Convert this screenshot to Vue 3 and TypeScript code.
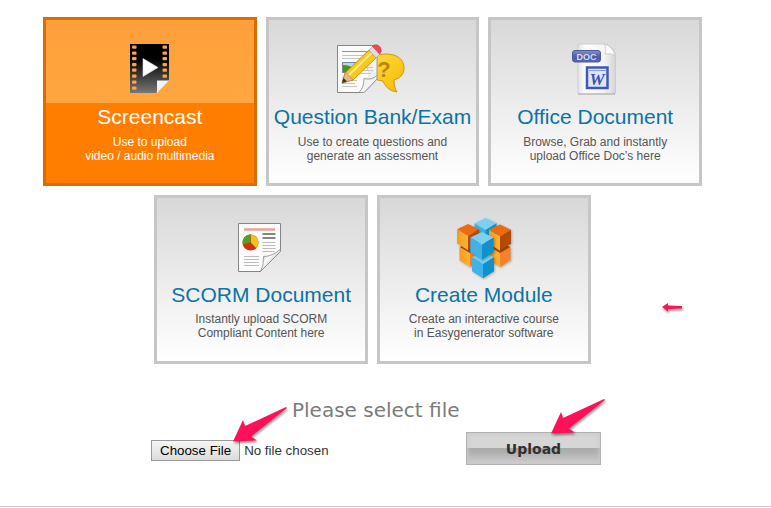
<script setup lang="ts">
import { ref } from 'vue'

type Kind = 'film' | 'exam' | 'office' | 'report' | 'cubes'

interface Option {
  kind: Kind
  title: string
  lines: [string, string]
}

interface Cube {
  x: number
  y: number
  w: number
  tone: 'blue' | 'orange'
}

const options: Option[] = [
  { kind: 'film', title: 'Screencast', lines: ['Use to upload', 'video / audio multimedia'] },
  { kind: 'exam', title: 'Question Bank/Exam', lines: ['Use to create questions and', 'generate an assessment'] },
  { kind: 'office', title: 'Office Document', lines: ['Browse, Grab and instantly', 'upload Office Doc’s here'] },
  { kind: 'report', title: 'SCORM Document', lines: ['Instantly upload SCORM', 'Compliant Content here'] },
  { kind: 'cubes', title: 'Create Module', lines: ['Create an interactive course', 'in Easygenerator software'] },
]

const selected = ref<Kind>('film')

// Painted back to front; x and y are the top corner of each cube.
const cubes: Cube[] = [
  { x: 43.5, y: 4, w: 11, tone: 'blue' },
  { x: 28, y: 28, w: 10.5, tone: 'orange' },
  { x: 58, y: 28, w: 10.5, tone: 'orange' },
  { x: 26, y: 10, w: 11, tone: 'orange' },
  { x: 58, y: 10.5, w: 11, tone: 'orange' },
  { x: 41, y: 38, w: 11, tone: 'blue' },
  { x: 40, y: 18, w: 11.7, tone: 'blue' },
]

const holes = [9.5, 15.5, 21, 27, 32.5, 38.5, 44.5, 50.5]

function cubeTop({ x, y, w }: Cube): string {
  return `M${x} ${y}l${w} ${w * 0.48}l${-w} ${w * 0.6}l${-w} ${-w * 0.6}z`
}
function cubeLeft({ x, y, w }: Cube): string {
  return `M${x - w} ${y + w * 0.48}l${w} ${w * 0.6}v${w * 1.3}l${-w} ${-w * 0.64}z`
}
function cubeRight({ x, y, w }: Cube): string {
  return `M${x + w} ${y + w * 0.48}l${-w} ${w * 0.6}v${w * 1.3}l${w} ${-w * 0.64}z`
}
</script>

<template>
  <main class="page">
    <nav class="options" aria-label="Content type">
      <a
        v-for="option in options"
        :key="option.kind"
        href="#"
        class="card"
        :class="{ active: selected === option.kind, shifted: option.kind === 'report' }"
        @click.prevent="selected = option.kind"
      >
        <svg v-if="option.kind === 'film'" class="icon" viewBox="0 0 84 64" aria-hidden="true">
          <defs>
            <linearGradient id="film" x1="0" y1="0" x2="0" y2="1">
              <stop offset="0.3" stop-color="#000" />
              <stop offset="1" stop-color="#777" />
            </linearGradient>
          </defs>
          <path d="M22 8h39v36L48 57H22z" fill="url(#film)" />
          <path d="M49 57V44.5h12z" fill="#f5f3f0" />
          <g fill="#ffa33c">
            <rect v-for="y in holes" :key="y" x="24" :y="y" width="4.5" height="3.2" rx="1" />
            <rect v-for="y in holes.slice(0, 6)" :key="y" x="54.5" :y="y" width="4.5" height="3.2" rx="1" />
          </g>
          <path d="M35 22.5L50 31.5L35 40.500z" fill="#fff" stroke="#ddd" stroke-opacity=".6" />
        </svg>

        <svg v-else-if="option.kind === 'exam'" class="icon" viewBox="0 0 84 64" aria-hidden="true">
          <defs>
            <linearGradient id="bubble" x1="0" y1="0" x2="1" y2="1">
              <stop offset="0" stop-color="#ffdf45" />
              <stop offset="1" stop-color="#f7b800" />
            </linearGradient>
          </defs>
          <path d="M7.5 9.5h40v33L34 56.5H7.5z" fill="#fbfbfb" stroke="#858585" />
          <path d="M12 15.5h27" stroke="#e0795c" />
          <path d="M12 19.5h26M12 22.5h24M29 28.5h17M29 31.5h17M27 34.5h18M24 37.5h19M12 41.5h15M12 44.5h15M12 47.5h13M12 50.5h15" stroke="#c6c6c6" />
          <rect x="12.5" y="26.5" width="15" height="10" fill="#b9d7ea" stroke="#789" />
          <path d="M13 29q7 0 14 5v2H13z" fill="#4c9418" />
          <path d="M56 18c12 0 18 6 18 14 0 7-4 10-10 12 0 5 1 9 3 12-8-1-12-6-14-11-10-1-15-6-15-13 0-9 8-14 18-14z" fill="url(#bubble)" stroke="#c49a18" />
          <text x="54" y="41" text-anchor="middle" class="question">?</text>
          <path d="M38 20l9-2v24.500L34 56.5H29q5-5 5-14 3 1 4 0z" fill="#eee" />
          <path d="M36 24l11-6v25L34 56.500H29q5-5 5-14 8 2 13-3" fill="#f3f3f3" stroke="#888" stroke-width=".8" />
          <path d="M31 31.5h12M29 34.5h14M27 37.5h14" stroke="#c6c6c6" />
          <path d="M12 47l3-10L39 14l7 8-23 22z" fill="#f8c81c" stroke="#b48a13" stroke-width=".8" />
          <path d="M18 40L41.5 17" stroke="#ffed82" stroke-width="2" />
          <path d="M12 47l3.5-11 7.5 8z" fill="#e9b58b" stroke="#a77a52" stroke-width=".6" />
          <path d="M12 47l1.5-5 3.5 3.5z" fill="#333" />
          <path d="M39 14l4-4 7 8-4 4z" fill="#dedede" stroke="#999" stroke-width=".6" />
          <path d="M42.5 10.5q4-4 8 1 2 4-1 6.5z" fill="#ec4a52" stroke="#c83843" stroke-width=".6" />
        </svg>

        <svg v-else-if="option.kind === 'office'" class="icon" viewBox="0 0 84 64" aria-hidden="true">
          <defs>
            <linearGradient id="sheet" x1="0" y1="0" x2="1" y2="0">
              <stop offset="0" stop-color="#e4e4e4" />
              <stop offset=".2" stop-color="#fdfdfd" />
              <stop offset=".7" stop-color="#f4f4f4" />
              <stop offset="1" stop-color="#d4d4d4" />
            </linearGradient>
            <linearGradient id="label" x1="0" y1="0" x2="0" y2="1">
              <stop offset="0" stop-color="#8793c9" />
              <stop offset=".5" stop-color="#4d5da9" />
              <stop offset="1" stop-color="#5666b4" />
            </linearGradient>
          </defs>
          <path d="M27 8h25q11 3 10.5 14v35q0 1-1 1H26q-1 0-1-1V10q0-2 2-2z" fill="url(#sheet)" stroke="#c4c4c4" stroke-width=".7" />
          <path d="M25 58h37" stroke="#aaa" />
          <path d="M51 8q3 3 1 10 6-2 10 2Q60 10 51 8z" fill="#fff" stroke="#bcbcbc" stroke-width=".6" />
          <rect x="19.5" y="14.5" width="28" height="11.5" rx="2.5" fill="url(#label)" stroke="#4c5a99" />
          <text x="33.5" y="23.5" text-anchor="middle" class="doc">DOC</text>
          <rect x="34" y="31.5" width="20.5" height="20.5" fill="#dfe5f8" stroke="#4058b5" stroke-width="2.5" />
          <path d="M36 34.5h17" stroke="#8c9cda" />
          <text x="44" y="49" text-anchor="middle" class="word">W</text>
        </svg>

        <svg v-else-if="option.kind === 'report'" class="icon" viewBox="0 0 84 64" aria-hidden="true">
          <defs>
            <linearGradient id="curl" x1="0" y1="0" x2="1" y2="1">
              <stop offset=".1" stop-color="#aaa" />
              <stop offset=".4" stop-color="#fff" />
              <stop offset=".6" stop-color="#ccc" />
            </linearGradient>
          </defs>
          <path d="M19.5 9.5h42v28L41.5 57.5h-22z" fill="#fcfcfc" stroke="#858585" />
          <path d="M25 15.5h31" stroke="#e0a794" stroke-width="2.5" />
          <path d="M43.500 20h13M43.500 24h13" stroke="#858585" stroke-width="2" />
          <path d="M43.500 28.500h13M43.500 31.500h13M43.500 34.500h13M43.500 37.500h12M25 42.500h15M25 45.500h15M25 48.500h15M25 51.500h15" stroke="#bbb" />
          <circle cx="31.5" cy="28.5" r="8" fill="#d92c12" />
          <path d="M31.5 28.5v-8a8 8 0 0 1 5.5 13.700z" fill="#f7be1c" />
          <path d="M31.5 28.5L23.8 30.5a8 8 0 0 1 7.700-10z" fill="#4fa51e" />
          <path d="M31.5 28.5v-8M31.5 28.5l5.5 5.700M31.5 28.5l-7.700 2" stroke="#8d6810" stroke-width=".6" />
          <path d="M61.5 35v2.5L41.5 57.5q3.5-6 3-15 9 0 17-7.5z" fill="url(#curl)" stroke="#8a8a8a" stroke-width=".8" />
        </svg>

        <svg v-else class="icon" viewBox="0 0 84 64" aria-hidden="true">
          <defs>
            <linearGradient id="orange" x1="0" y1="0" x2="1" y2="0">
              <stop offset="0" stop-color="#f59a20" />
              <stop offset="1" stop-color="#ffb52d" />
            </linearGradient>
          </defs>
          <g v-for="(cube, index) in cubes" :key="index" class="cube">
            <path :d="cubeTop(cube)" :fill="cube.tone === 'blue' ? '#7dcff4' : index < 3 ? '#b54a05' : '#ee6a12'" />
            <path :d="cubeLeft(cube)" :fill="cube.tone === 'blue' ? '#3fb3e8' : 'url(#orange)'" />
            <path :d="cubeRight(cube)" :fill="cube.tone === 'blue' ? '#0f91c9' : index < 3 ? '#f58128' : '#b54a05'" />
          </g>
        </svg>

        <strong class="title">{{ option.title }}</strong>
        <span class="text">{{ option.lines[0] }}<br />{{ option.lines[1] }}</span>
      </a>

      <svg class="pointer small" viewBox="0 0 20 10" aria-hidden="true">
        <path d="M0 4L6 0V2.5L20 3V5.500L6 6V8.500z" />
      </svg>
    </nav>

    <form class="upload" @submit.prevent>
      <label class="prompt" for="file">Please select file</label>
      <div class="controls">
        <div class="field">
          <input id="file" class="file" type="file" />
          <svg class="pointer choose" viewBox="0 0 54 35" aria-hidden="true">
            <path d="M0 34.500L10 13L12 19L53 0L54 1L18 29.500L24 33.500z" />
          </svg>
        </div>
        <div class="action">
          <button class="submit" type="submit">Upload</button>
          <svg class="pointer send" viewBox="0 0 54 35" aria-hidden="true">
            <path d="M0 34.500L10 13L12 19L53 0L54 1L18 29.500L24 33.500z" />
          </svg>
        </div>
      </div>
    </form>
    <hr class="rule" />
  </main>
</template>

<style>
body {
  margin: 0;
  background: #fff;
}
</style>

<style scoped>
.page {
  font-family: "Liberation Sans", Arial, sans-serif;
  padding-top: 17px;
}

.options {
  position: relative;
  display: grid;
  grid-template-columns: repeat(6, minmax(0, 1fr));
  gap: 9px;
  margin: 0 69px 0 43px;
}

.card {
  grid-column: span 2;
  box-sizing: border-box;
  min-height: 169px;
  padding: 16px 0 18px;
  border: 3px solid #c6c6c6;
  background: linear-gradient(#d8d8d8, #fff);
  color: #555;
  display: flex;
  flex-direction: column;
  align-items: center;
  text-align: center;
  text-decoration: none;
}

.card.shifted {
  grid-column: 2 / span 2;
}

.card.active {
  border-color: #dc6c00;
  background: linear-gradient(#ffa03a, #ffa640 83px, #ff7e00 83px);
  color: #fff;
}

.icon {
  width: 84px;
  height: 64px;
  overflow: visible;
  fill: none;
}

.title {
  margin-top: 5px;
  font-size: 21px;
  line-height: 24px;
  font-weight: 400;
  color: #0b73a5;
  white-space: nowrap;
}

.active .title {
  color: #fff;
}

.text {
  margin-top: 6px;
  font-size: 12px;
  line-height: 14px;
}

.shifted .text,
.shifted + .card .text {
  margin-top: 5px;
}

.question {
  font: bold 22px "Liberation Sans", Arial, sans-serif;
  fill: #bd860b;
}

.doc {
  font: bold 9px "Liberation Sans", Arial, sans-serif;
  fill: #d8def5;
}

.word {
  font: italic bold 17px "Liberation Serif", serif;
  fill: #3b52b4;
}

.cube {
  filter: drop-shadow(1px 1px 1px rgba(0, 0, 0, 0.25));
}

.pointer {
  position: absolute;
  overflow: visible;
  fill: #ff1058;
  filter: drop-shadow(1px 2px 1px rgba(0, 0, 0, 0.4));
  pointer-events: none;
}

.small {
  width: 20px;
  height: 10px;
  right: 20px;
  bottom: 51px;
}

.upload {
  padding-top: 34px;
}

.prompt {
  display: block;
  margin-left: 292px;
  font-family: "DejaVu Sans", Verdana, sans-serif;
  font-size: 20px;
  line-height: 24px;
  color: #7b7b7b;
}

.controls {
  display: flex;
  align-items: center;
  margin: 10px 0 0 151px;
}

.field {
  position: relative;
  width: 315px;
  padding-top: 3px;
}

.file {
  display: block;
  width: 100%;
  font-family: "Liberation Sans", Arial, sans-serif;
  color: #333;
}

.file::file-selector-button {
  height: 21px;
  margin: 0 4px 0 0;
  padding: 0 8px;
  border: 1px solid #999;
  border-radius: 0;
  background: linear-gradient(#f5f5f5, #dcdcdc);
  color: #000;
  font-family: inherit;
}

.action {
  position: relative;
}

.submit {
  display: block;
  width: 135px;
  height: 33px;
  padding: 0;
  border: 1px solid #b0b0b0;
  background: linear-gradient(#d6d6d6 48%, #a9a9a9 48%, #b2b2b2 65%, #cfcfcf);
  box-shadow: inset 0 0 4px 1px #c9c9c9;
  font-family: "DejaVu Sans", Verdana, sans-serif;
  font-size: 14px;
  font-weight: 700;
  color: #303030;
}

.choose,
.send {
  width: 54px;
  height: 35px;
}

.choose {
  left: 82px;
  bottom: 19px;
}

.send {
  left: 85px;
  bottom: 31px;
}

.rule {
  margin: 41px 0 0;
  border: 0;
  border-top: 1px solid #ccc;
}
</style>
